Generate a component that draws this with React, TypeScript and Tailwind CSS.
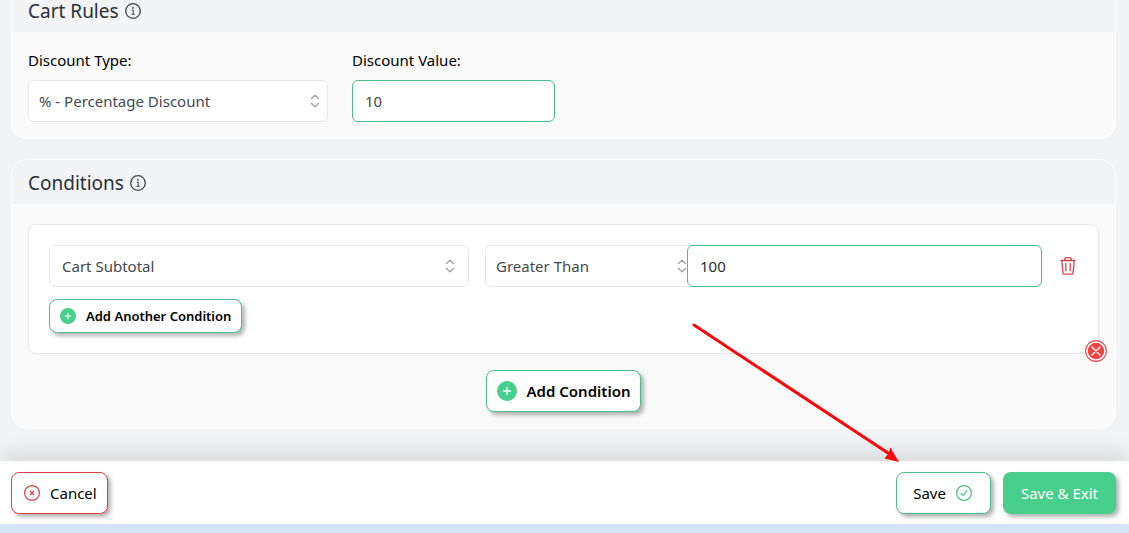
import type { ReactNode, SelectHTMLAttributes } from 'react';

interface SelectBoxProps extends SelectHTMLAttributes<HTMLSelectElement> {
  arrowClass: string;
}

function SelectBox({ arrowClass, className, children, ...props }: SelectBoxProps) {
  return (
    <div className="relative">
      <select
        {...props}
        className={`h-[42px] w-full appearance-none rounded-md border border-gray-200 bg-white text-[#43494f] outline-none ${className}`}
      >
        {children}
      </select>
      <svg
        viewBox="0 0 10 14"
        className={`pointer-events-none absolute top-[14px] h-[14px] w-[10px] text-[#a3a6aa] ${arrowClass}`}
        fill="none"
        stroke="currentColor"
        strokeWidth="1.5"
        strokeLinecap="round"
        strokeLinejoin="round"
      >
        <path d="M1.5 4.5 5 1.2l3.5 3.3M1.5 9.5 5 12.8l3.5-3.3" />
      </svg>
    </div>
  );
}

function InfoIcon() {
  return (
    <svg viewBox="0 0 16 16" className="h-4 w-4 text-[#3c4248]" fill="none" stroke="currentColor">
      <circle cx="8" cy="8" r="7.3" strokeWidth="1.3" />
      <path d="M6.7 7.2h1.500v4M6.500 11.300h3.200" strokeWidth="1" />
      <circle cx="8" cy="4.9" r="0.9" fill="currentColor" stroke="none" />
    </svg>
  );
}

function PlusIcon({ className }: { className: string }) {
  return (
    <svg viewBox="0 0 20 20" className={className}>
      <circle cx="10" cy="10" r="10" fill="#48cf8b" />
      <path d="M10 6.5v7M6.5 10h7" stroke="#fff" strokeWidth="1.3" strokeLinecap="round" />
    </svg>
  );
}

interface CardProps {
  title: string;
  // attached cards sit flush with the top of the page
  attached?: boolean;
  children: ReactNode;
}

function Card({ title, attached = false, children }: CardProps) {
  return (
    <section
      className={`overflow-hidden border border-white bg-[#fafafa] ${
        attached ? 'rounded-b-2xl border-t-0' : 'rounded-2xl'
      }`}
    >
      <header
        className={`flex items-center gap-1.5 bg-[#f3f4f6] px-4 ${attached ? 'h-8 pb-2.5' : 'h-11 pt-0.5'}`}
      >
        <h2 className="text-[19px] leading-5 text-[#2b3036]">{title}</h2>
        <InfoIcon />
      </header>
      {children}
    </section>
  );
}

export default function App() {
  return (
    <div className="relative overflow-hidden bg-[#d9e5fb] pb-[9px] font-['Noto_Sans',sans-serif] text-[15px] leading-6">
      <main className="flex flex-col gap-5 bg-[#f3f4f6] pr-[13px] pb-8 pl-[11px]">
        <Card title="Cart Rules" attached>
          <div className="flex gap-6 p-4">
            <div className="flex w-[300px] flex-col gap-2">
              <label htmlFor="discount-type">Discount Type:</label>
              <SelectBox id="discount-type" className="px-2.5" arrowClass="right-2">
                <option>% - Percentage Discount</option>
              </SelectBox>
            </div>
            <div className="flex w-[203px] flex-col gap-2">
              <label htmlFor="discount-value">Discount Value:</label>
              <input
                id="discount-value"
                type="text"
                defaultValue="10"
                className="h-[42px] w-full rounded-md border border-[#48c08a] bg-white px-3 text-[#43494f] outline-none"
              />
            </div>
          </div>
        </Card>

        <Card title="Conditions">
          <div className="flex flex-col items-center gap-4 px-4 pt-5 pb-4">
            <div className="relative w-full rounded-lg border border-gray-200 bg-white p-5">
              <div className="grid grid-cols-[420fr_557fr_20px] items-center gap-4">
                <SelectBox aria-label="Condition" className="px-3" arrowClass="right-[14px]">
                  <option>Cart Subtotal</option>
                </SelectBox>
                <div className="flex">
                  <div className="w-[210px]">
                    <SelectBox aria-label="Comparison" className="px-2.5" arrowClass="right-2">
                      <option>Greater Than</option>
                    </SelectBox>
                  </div>
                  <input
                    aria-label="Condition value"
                    type="text"
                    defaultValue="100"
                    className="relative -ml-2 h-[42px] min-w-0 flex-1 rounded-md border border-[#48c08a] bg-white px-3 text-[#2b3036] outline-none"
                  />
                </div>
                <button type="button" aria-label="Delete condition" className="text-[#d94348]">
                  <svg
                    viewBox="0 0 20 20"
                    className="h-5 w-5"
                    fill="none"
                    stroke="currentColor"
                    strokeWidth="1.3"
                    strokeLinecap="round"
                    strokeLinejoin="round"
                  >
                    <path d="M3 4.5h14M6.5 4.3C6.7 2.6 7.6 1.6 9 1.6h2c1.4 0 2.3 1 2.5 2.7M3.8 4.8l1.1 11.8c.1 1 .7 1.6 1.7 1.6h6.8c1 0 1.6-.6 1.7-1.6l1.1-11.8" />
                    <path d="M7.8 7.6v7.2M12.2 7.6v7.2" />
                  </svg>
                </button>
              </div>
              <button
                type="button"
                className="mt-3 flex h-[34px] items-center gap-2.5 rounded-lg border border-[#48c08a] bg-white px-2.5 text-[13px] font-semibold shadow-[3px_3px_4px_rgba(0,0,0,0.3)]"
              >
                <PlusIcon className="h-4 w-4" />
                Add Another Condition
              </button>
              <button
                type="button"
                aria-label="Remove group"
                className="absolute -right-[9px] -bottom-[9px] rounded-full text-[#ef4444]"
              >
                <svg viewBox="0 0 22 22" className="h-[22px] w-[22px]" fill="none" strokeLinecap="round">
                  <circle cx="11" cy="11" r="10.4" fill="#fff" stroke="#e04a4e" strokeWidth="1.1" />
                  <circle cx="11" cy="11" r="8.2" fill="currentColor" />
                  <path d="m7 7 8 8M15 7l-8 8" stroke="#fff" strokeWidth="1.2" />
                </svg>
              </button>
            </div>
            <button
              type="button"
              className="flex h-[42px] items-center gap-2.5 rounded-lg border border-[#48c08a] bg-white px-2.5 font-semibold shadow-[3px_3px_4px_rgba(0,0,0,0.3)]"
            >
              <PlusIcon className="h-5 w-5" />
              Add Condition
            </button>
          </div>
        </Card>
      </main>

      <footer className="relative flex items-center gap-3 bg-white pt-[11px] pr-[13px] pb-2.5 pl-[11px] shadow-[0_-10px_20px_rgba(0,0,0,0.1)]">
        <button
          type="button"
          className="mr-auto flex h-[42px] items-center gap-2.5 rounded-lg border border-[#d94348] bg-white pr-2.5 pl-3 shadow-[3px_3px_4px_rgba(0,0,0,0.3)]"
        >
          <svg viewBox="0 0 16 16" className="h-4 w-4 text-[#d94348]" fill="none" stroke="currentColor">
            <circle cx="8" cy="8" r="7.4" strokeWidth="1.2" />
            <path d="m6 6 4 4M10 6l-4 4" strokeWidth="1.4" />
          </svg>
          Cancel
        </button>
        <button
          type="button"
          className="flex h-[42px] items-center gap-2.5 rounded-lg border border-[#48c08a] bg-white pr-[18px] pl-4 shadow-[3px_3px_4px_rgba(0,0,0,0.3)]"
        >
          Save
          <svg viewBox="0 0 16 16" className="h-4 w-4 text-[#48c08a]" fill="none" stroke="currentColor">
            <circle cx="8" cy="8" r="7.4" strokeWidth="1.2" />
            <path d="m5 8.300 2.200 2.300L10.900 5.600" strokeWidth="1.2" strokeLinecap="round" />
          </svg>
        </button>
        <button
          type="button"
          className="h-[42px] rounded-lg bg-[#48cf8b] px-[18px] text-white shadow-[3px_3px_4px_rgba(0,0,0,0.3)]"
        >
          Save &amp; Exit
        </button>
      </footer>

      {/* pointer to the Save button */}
      <svg
        viewBox="0 0 208 140"
        className="pointer-events-none absolute right-[229px] bottom-[70px] h-[140px] w-[208px]"
        aria-hidden="true"
      >
        <path d="M2 2 196 130" stroke="#f80808" strokeWidth="3" strokeLinecap="round" />
        <path d="m207 139-14.5-3.5 4-5 1.8-6z" fill="#f80808" />
      </svg>
    </div>
  );
}
